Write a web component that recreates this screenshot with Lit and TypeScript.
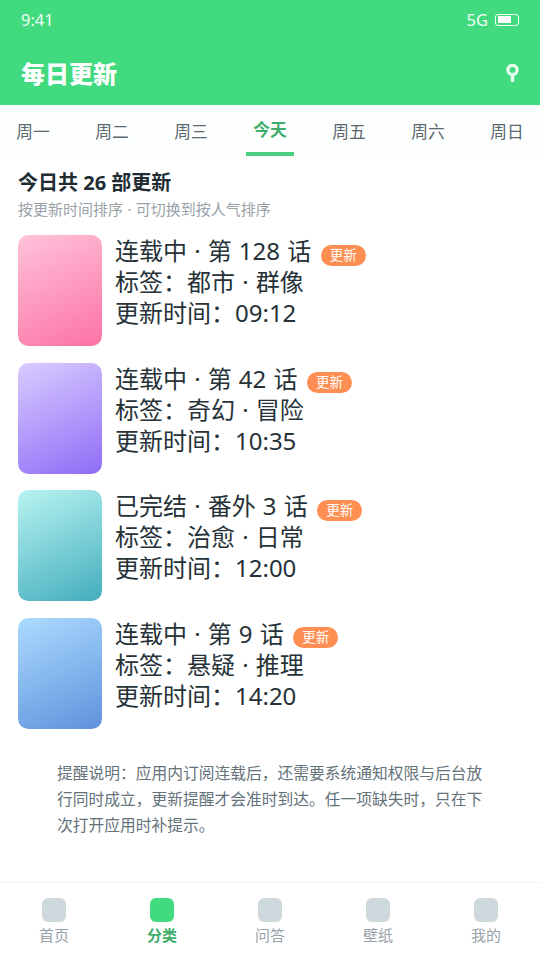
import { LitElement, html, css, svg } from "lit";
import { customElement } from "lit/decorators.js";
import { classMap } from "lit/directives/class-map.js";

interface Comic {
  cover: string;
  title: string;
  tags: string;
  time: string;
}

const DAYS = ["周一", "周二", "周三", "今天", "周五", "周六", "周日"];
const NAV = ["首页", "分类", "问答", "壁纸", "我的"];
const COMICS: Comic[] = [
  { cover: "pink", title: "连载中 · 第 128 话", tags: "都市 · 群像", time: "09:12" },
  { cover: "violet", title: "连载中 · 第 42 话", tags: "奇幻 · 冒险", time: "10:35" },
  { cover: "teal", title: "已完结 · 番外 3 话", tags: "治愈 · 日常", time: "12:00" },
  { cover: "blue", title: "连载中 · 第 9 话", tags: "悬疑 · 推理", time: "14:20" },
];

@customElement("app-root")
export class AppRoot extends LitElement {
  static styles = css`
    :host {
      display: flex;
      flex-direction: column;
      width: 540px;
      height: 960px;
      overflow: hidden;
      background: #fff;
      color: #263238;
      font-family: "Noto Sans", "Noto Sans CJK SC", sans-serif;
      font-weight: 400;
    }
    * { box-sizing: border-box; }
    .head { flex: none; height: 105px; background: #42da7f; color: #fff; }
    .status {
      display: flex;
      justify-content: space-between;
      align-items: center;
      height: 39px;
      padding: 0 21px;
      font-size: 16.5px;
      line-height: 24px;
      color: #effff5;
    }
    .signal { display: flex; align-items: center; gap: 7px; }
    .battery {
      width: 24px;
      height: 12px;
      padding: 1.5px;
      border: 1px solid #effff5;
      border-radius: 3px;
    }
    .level { width: 13px; height: 7px; background: #fff; }
    .bar {
      display: flex;
      justify-content: space-between;
      align-items: center;
      height: 69px;
      padding: 0 21px;
    }
    .name { font-size: 24px; font-weight: 900; line-height: 36px; }
    .search { display: block; width: 13px; height: 18px; margin-bottom: 1px; }
    .tabs {
      flex: none;
      display: flex;
      justify-content: space-between;
      height: 51px;
      padding: 0 9px;
      background: #fdfffe;
    }
    .tab {
      width: 48px;
      text-align: center;
      font-size: 16.75px;
      line-height: 53px;
      color: #5a6870;
    }
    .tab.on {
      border-bottom: 4px solid #4bcf80;
      color: #3fae6b;
      font-weight: 700;
      line-height: 49px;
    }
    .intro { padding: 10px 18px 0; height: 79px; }
    .count { font-size: 20px; font-weight: 700; line-height: 33px; color: #202c32; }
    .sort { font-size: 15px; line-height: 21px; color: #98a2a8; word-spacing: 0.5px; }
    .list { display: flex; flex-direction: column; gap: 16.5px; padding: 0 18px; }
    .item { display: flex; gap: 13px; height: 111px; }
    .cover { flex: none; width: 84px; height: 111px; border-radius: 10.5px; }
    .pink { background: linear-gradient(155deg, #ffc3da, #fc72a4); }
    .violet { background: linear-gradient(155deg, #d9ccff, #8f6cf6); }
    .teal { background: linear-gradient(155deg, #b8f4f1, #43adbd); }
    .blue { background: linear-gradient(155deg, #acdcff, #5f91dc); }
    .info {
      font-size: 24px;
      line-height: 31px;
      white-space: nowrap;
      word-spacing: 0.9px;
    }
    .line { display: flex; align-items: center; height: 31px; }
    .badge {
      height: 21px;
      margin: 9px 0 0 9.5px;
      padding: 0 9px;
      border-radius: 11px;
      background: #ff8e52;
      color: #fff;
      font-size: 13.5px;
      line-height: 21px;
    }
    .note {
      width: 432px;
      margin: 31px 0 0 57px;
      font-size: 15.75px;
      line-height: 26px;
      color: #64727a;
    }
    .nav {
      flex: none;
      display: flex;
      height: 78px;
      margin-top: auto;
      padding-top: 15px;
      border-top: 1px solid #f0f2f3;
    }
    .link {
      flex: 1;
      display: flex;
      flex-direction: column;
      align-items: center;
      gap: 2px;
      font-size: 15px;
      line-height: 22px;
      color: #98a2a8;
    }
    .mark { width: 24px; height: 24px; border-radius: 6px; background: #cfd8dd; }
    .link.on { color: #3fae6b; font-weight: 700; }
    .link.on .mark { background: #42da7f; }
  `;

  private searchIcon() {
    return html`<svg class="search" viewBox="0 0 13 18">
      ${svg`<circle cx="6.5" cy="6" r="4.6" fill="none" stroke="#e6ffef" stroke-width="3.2"/>
      <path d="M6.5 10V18" fill="none" stroke="#e6ffef" stroke-width="3.4"/>`}
    </svg>`;
  }

  render() {
    return html`
      <header class="head">
        <div class="status">
          <span>9:41</span>
          <span class="signal">5G<span class="battery"><div class="level"></div></span></span>
        </div>
        <div class="bar"><div class="name">每日更新</div>${this.searchIcon()}</div>
      </header>
      <nav class="tabs">
        ${DAYS.map((d) => html`<div class=${classMap({ tab: true, on: d === "今天" })}>${d}</div>`)}
      </nav>
      <section class="intro">
        <div class="count">今日共 26 部更新</div>
        <div class="sort">按更新时间排序 · 可切换到按人气排序</div>
      </section>
      <main class="list">
        ${COMICS.map(
          (c) => html`<article class="item">
            <div class="cover ${c.cover}"></div>
            <div class="info">
              <div class="line"><span>${c.title}</span><span class="badge">更新</span></div>
              <div class="line">标签：${c.tags}</div>
              <div class="line">更新时间：${c.time}</div>
            </div>
          </article>`
        )}
      </main>
      <div class="note">提醒说明：应用内订阅连载后，还需要系统通知权限与后台放行同时成立，更新提醒才会准时到达。任一项缺失时，只在下次打开应用时补提示。</div>
      <footer class="nav">
        ${NAV.map(
          (n) => html`<div class=${classMap({ link: true, on: n === "分类" })}>
            <span class="mark"></span><span>${n}</span>
          </div>`
        )}
      </footer>
    `;
  }
}
